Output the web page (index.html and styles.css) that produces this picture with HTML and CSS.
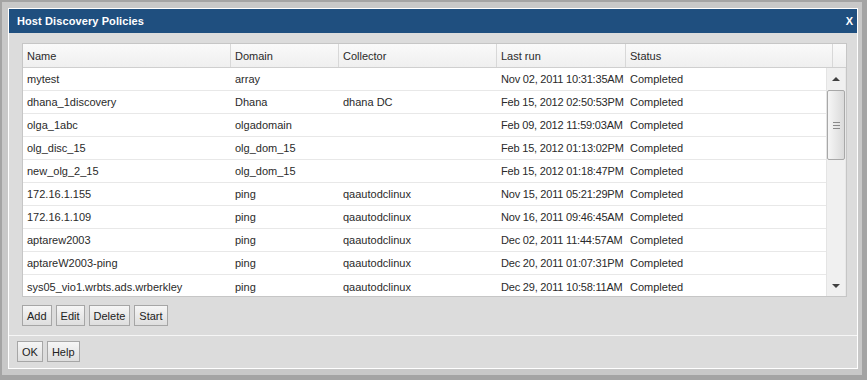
FILE: index.html
```html
<!DOCTYPE html>
<html>
<head>
<meta charset="utf-8">
<link rel="stylesheet" href="styles.css">
</head>
<body>
<div class="screen">
  <div class="dialog">
    <div class="titlebar">
      <span class="title">Host Discovery Policies</span>
      <span class="close">X</span>
    </div>
    <div class="body">
      <div class="grid">
        <div class="ghead">
          <div class="hc c1">Name</div>
          <div class="hc c2">Domain</div>
          <div class="hc c3">Collector</div>
          <div class="hc c4">Last run</div>
          <div class="hc c5">Status</div>
          <div class="hc c6"></div>
        </div>
        <div class="gbody">
          <div class="rows">
            <div class="row"><div class="c c1">mytest</div><div class="c c2">array</div><div class="c c3"></div><div class="c c4">Nov 02, 2011 10:31:35AM</div><div class="c c5">Completed</div></div>
            <div class="row"><div class="c c1">dhana_1discovery</div><div class="c c2">Dhana</div><div class="c c3">dhana DC</div><div class="c c4">Feb 15, 2012 02:50:53PM</div><div class="c c5">Completed</div></div>
            <div class="row"><div class="c c1">olga_1abc</div><div class="c c2">olgadomain</div><div class="c c3"></div><div class="c c4">Feb 09, 2012 11:59:03AM</div><div class="c c5">Completed</div></div>
            <div class="row"><div class="c c1">olg_disc_15</div><div class="c c2">olg_dom_15</div><div class="c c3"></div><div class="c c4">Feb 15, 2012 01:13:02PM</div><div class="c c5">Completed</div></div>
            <div class="row"><div class="c c1">new_olg_2_15</div><div class="c c2">olg_dom_15</div><div class="c c3"></div><div class="c c4">Feb 15, 2012 01:18:47PM</div><div class="c c5">Completed</div></div>
            <div class="row"><div class="c c1">172.16.1.155</div><div class="c c2">ping</div><div class="c c3">qaautodclinux</div><div class="c c4">Nov 15, 2011 05:21:29PM</div><div class="c c5">Completed</div></div>
            <div class="row"><div class="c c1">172.16.1.109</div><div class="c c2">ping</div><div class="c c3">qaautodclinux</div><div class="c c4">Nov 16, 2011 09:46:45AM</div><div class="c c5">Completed</div></div>
            <div class="row"><div class="c c1">aptarew2003</div><div class="c c2">ping</div><div class="c c3">qaautodclinux</div><div class="c c4">Dec 02, 2011 11:44:57AM</div><div class="c c5">Completed</div></div>
            <div class="row"><div class="c c1">aptareW2003-ping</div><div class="c c2">ping</div><div class="c c3">qaautodclinux</div><div class="c c4">Dec 20, 2011 01:07:31PM</div><div class="c c5">Completed</div></div>
            <div class="row"><div class="c c1">sys05_vio1.wrbts.ads.wrberkley</div><div class="c c2">ping</div><div class="c c3">qaautodclinux</div><div class="c c4">Dec 29, 2011 10:58:11AM</div><div class="c c5">Completed</div></div>
          </div>
          <div class="scrollbar">
            <div class="arrow up"></div>
            <div class="track">
              <div class="thumb"><span class="grip"></span></div>
            </div>
            <div class="arrow down"></div>
          </div>
        </div>
      </div>
      <div class="actions">
        <button class="btn">Add</button>
        <button class="btn">Edit</button>
        <button class="btn">Delete</button>
        <button class="btn">Start</button>
      </div>
      <div class="footer">
        <button class="btn">OK</button>
        <button class="btn">Help</button>
      </div>
    </div>
  </div>
</div>
</body>
</html>
```
FILE: styles.css
```css
html, body {
  margin: 0;
  padding: 0;
}
body {
  width: 867px;
  height: 380px;
  overflow: hidden;
  background: #a4a4a4;
  font-family: "Liberation Sans", Arial, sans-serif;
  font-size: 11px;
  color: #2a2a2a;
}
.screen {
  box-sizing: border-box;
  width: 860px;
  height: 373px;
  margin: 2px 0 0 2px;
  padding: 6px 4px 6px 6px;
  background: #c8c8c8;
}
.dialog {
  box-sizing: border-box;
  height: 361px;
  border: 1px solid #ffffff;
  background: #dcdcdc;
  display: flex;
  flex-direction: column;
}
.titlebar {
  height: 24px;
  background: #1f4f7f;
  color: #ffffff;
  display: flex;
  align-items: center;
  justify-content: space-between;
  padding: 0 4px 0 8px;
  font-weight: bold;
  font-size: 11px;
  flex: none;
}
.title {
  letter-spacing: 0.1px;
}
.body {
  flex: 1;
  display: flex;
  flex-direction: column;
  padding: 10px 10px 0 13px;
}
.grid {
  height: 254px;
  box-sizing: border-box;
  border: 1px solid #c6c6c6;
  background: #ffffff;
  display: flex;
  flex-direction: column;
  flex: none;
}
.ghead {
  display: flex;
  height: 23px;
  background: linear-gradient(#fafafa, #efefef);
  border-bottom: 1px solid #cfcfcf;
  flex: none;
}
.hc {
  box-sizing: border-box;
  display: flex;
  align-items: center;
  padding-left: 4px;
  border-right: 1px solid #d8d8d8;
  height: 100%;
  flex: none;
}
.c1 { width: 208px; }
.c2 { width: 108px; }
.c3 { width: 158px; }
.c4 { width: 129px; }
.c5 { width: 207px; }
.c6 { width: 13px; border-right: none; }
.gbody {
  flex: 1;
  display: flex;
  min-height: 0;
}
.rows {
  flex: 1;
  min-width: 0;
  display: flex;
  flex-direction: column;
  overflow: hidden;
}
.row {
  display: flex;
  height: 23px;
  box-sizing: border-box;
  border-bottom: 1px solid #e8e8e8;
  align-items: center;
  flex: none;
}
.row:last-child {
  border-bottom: none;
}
.c {
  box-sizing: border-box;
  padding-left: 4px;
  white-space: nowrap;
  flex: none;
}
.row .c4 {
  letter-spacing: -0.2px;
}
.scrollbar {
  width: 20px;
  flex: none;
  box-sizing: border-box;
  background: #f0f0f0;
  border-left: 1px solid #e4e4e4;
  border-right: 1px solid #e8e8e8;
  display: flex;
  flex-direction: column;
}
.arrow {
  height: 21px;
  display: flex;
  align-items: center;
  justify-content: center;
  flex: none;
}
.arrow::after {
  content: "";
  width: 0;
  height: 0;
  border-left: 4px solid transparent;
  border-right: 4px solid transparent;
}
.up::after {
  border-bottom: 4px solid #404040;
}
.down::after {
  border-top: 4px solid #404040;
}
.track {
  flex: 1;
}
.thumb {
  box-sizing: border-box;
  margin: 1px 0 0 0;
  height: 70px;
  border: 1px solid #a8a8a8;
  border-radius: 2px;
  background: linear-gradient(90deg, #f6f6f6, #dadada);
  display: flex;
  align-items: center;
  justify-content: center;
}
.grip {
  width: 7px;
  height: 5px;
  border-top: 1px solid #8a8a8a;
  border-bottom: 1px solid #8a8a8a;
  position: relative;
}
.grip::after {
  content: "";
  position: absolute;
  left: 0;
  right: 0;
  top: 2px;
  border-top: 1px solid #8a8a8a;
}
.actions {
  display: flex;
  gap: 4px;
  padding-top: 8px;
  height: 21px;
  padding-bottom: 9px;
  border-bottom: 1px solid #f6f6f6;
  margin: 0 -10px 0 -13px;
  padding-left: 13px;
}
.footer {
  display: flex;
  gap: 4px;
  padding: 5px 0 0 8px;
  margin: 0 0 0 -13px;
}
.btn {
  font-family: "Liberation Sans", Arial, sans-serif;
  font-size: 11px;
  color: #222;
  height: 21px;
  padding: 0 4px;
  border: 1px solid #a6a6a6;
  border-radius: 0;
  background: linear-gradient(#f6f6f6, #dedede);
  margin: 0;
}
```
